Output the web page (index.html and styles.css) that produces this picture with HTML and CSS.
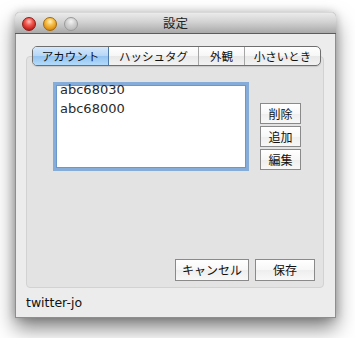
FILE: index.html
```html
<!DOCTYPE html>
<html lang="ja">
<head>
<meta charset="utf-8">
<title>設定</title>
<link rel="stylesheet" href="styles.css">
</head>
<body>
<div class="window">
  <div class="titlebar">
    <div class="lights">
      <span class="light red"></span>
      <span class="light orange"></span>
      <span class="light gray"></span>
    </div>
    <div class="title">設定</div>
  </div>
  <div class="content">
    <div class="group">
      <div class="tabs">
        <div class="tab selected t1">アカウント</div>
        <div class="tab t2">ハッシュタグ</div>
        <div class="tab t3">外観</div>
        <div class="tab t4">小さいとき</div>
      </div>
      <div class="main">
        <div class="list">
          <div class="item first">abc68030</div>
          <div class="item">abc68000</div>
        </div>
        <div class="side">
          <button class="btn small">削除</button>
          <button class="btn small">追加</button>
          <button class="btn small">編集</button>
        </div>
      </div>
      <div class="footer">
        <button class="btn cancel">キャンセル</button>
        <button class="btn save">保存</button>
      </div>
    </div>
    <div class="status">twitter-jo</div>
  </div>
</div>
</body>
</html>
```

FILE: styles.css
```css
html, body {
  margin: 0;
  padding: 0;
  background: #ffffff;
}
body {
  font-family: "DejaVu Sans", "Noto Sans CJK JP", sans-serif;
  color: #111;
  min-height: 338px;
  padding-top: 12px;
  padding-bottom: 20px;
  box-sizing: border-box;
  overflow: hidden;
}
.window {
  margin: 0 0 0 15px;
  width: 321px;
  height: 306px;
  box-sizing: border-box;
  background: #ececec;
  border: 1px solid #8e8e8e;
  border-top: none;
  border-radius: 5px 5px 0 0;
  box-shadow: 0 10px 20px rgba(0, 0, 0, 0.5), 0 0 8px rgba(0,0,0,0.2);
  display: flex;
  flex-direction: column;
}
.titlebar {
  height: 22px;
  box-sizing: border-box;
  margin: 0 -1px;
  border-radius: 5px 5px 0 0;
  background: linear-gradient(#ebebeb, #d2d2d2 45%, #a9a9a9);
  border-bottom: 1px solid #5c5c5c;
  border-top: 1px solid #d8d8d8;
  display: flex;
  align-items: center;
}
.lights {
  display: flex;
  gap: 7px;
  margin-left: 7px;
  margin-top: 1px;
}
.light {
  width: 14px;
  height: 14px;
  border-radius: 50%;
  box-sizing: border-box;
}
.red {
  background: radial-gradient(circle at 50% 30%, #ffc4c0 0, #f25a52 35%, #c3211b 75%, #8e1410 100%);
  border: 1px solid #8b1b17;
}
.orange {
  background: radial-gradient(circle at 50% 30%, #fff1c4 0, #f6c04a 35%, #e08e10 75%, #a9630a 100%);
  border: 1px solid #a0680d;
}
.gray {
  background: radial-gradient(circle at 50% 30%, #f4f4f4 0, #d2d2d2 40%, #b0b0b0 100%);
  border: 1px solid #9a9a9a;
}
.title {
  flex: 1;
  text-align: center;
  font-family: "Noto Sans CJK JP", sans-serif;
  font-size: 12.5px;
  color: #222;
  margin-left: -63px;
  line-height: 20px;
}
.content {
  flex: 1;
  display: flex;
  flex-direction: column;
  padding: 0 11px 0 10px;
}
.group {
  margin-top: 22px;
  height: 232px;
  box-sizing: border-box;
  background: #e3e3e3;
  border: 1px solid #d2d2d2;
  border-radius: 4px;
  display: flex;
  flex-direction: column;
}
.tabs {
  margin: -11px 0 0 5px;
  display: flex;
  height: 20px;
  box-sizing: border-box;
  border: 1px solid #6f6f6f;
  border-radius: 5px;
  overflow: hidden;
  width: 289px;
  background: linear-gradient(#ffffff, #f6f6f6 50%, #e8e8e8 51%, #f2f2f2);
  box-shadow: 0 1px 1px rgba(0,0,0,0.12);
}
.tab {
  font-family: "Noto Sans CJK JP", sans-serif;
  font-size: 11.5px;
  line-height: 18px;
  text-align: center;
  color: #111;
  border-left: 1px solid #a6a6a6;
  box-sizing: border-box;
}
.tab.t1 { width: 76px; border-left: none; }
.tab.t2 { width: 89px; }
.tab.t3 { width: 46px; }
.tab.t4 { flex: 1; }
.tab.selected {
  background: linear-gradient(#d6e9fb, #b6d6f5 50%, #93c3f0 51%, #b2dafa);
  border-right: 1px solid #4f79a8;
}
.tab.selected + .tab { border-left: none; }
.main {
  display: flex;
  margin-top: 16px;
  margin-left: 26px;
}
.list {
  width: 196px;
  height: 89px;
  box-sizing: border-box;
  background: #fff;
  border: 3px solid #86acd9;
  box-shadow: inset 0 0 0 1px #6a97cc;
  padding: 0 4px;
  font-size: 13px;
  line-height: 18.5px;
  color: #2a2a2a;
}
.item.first { margin-top: -4px; }
.side {
  display: flex;
  flex-direction: column;
  gap: 2px;
  margin-left: 11px;
  margin-top: 21px;
}
.btn {
  font-family: "Noto Sans CJK JP", sans-serif;
  font-size: 12px;
  color: #111;
  height: 22px;
  padding: 0;
  box-sizing: border-box;
  border: 1px solid #8a8a8a;
  background: linear-gradient(#ffffff, #f7f7f7 50%, #eeeeee 51%, #f8f8f8);
  border-radius: 0;
  line-height: 18px;
}
.btn.small { width: 41px; height: 21px; }
.footer {
  margin-top: auto;
  margin-bottom: 6px;
  margin-right: 8px;
  display: flex;
  justify-content: flex-end;
  gap: 6px;
}
.btn.cancel { width: 74px; }
.btn.save { width: 60px; }
.status {
  font-size: 12.5px;
  margin-top: 7px;
  color: #111;
  line-height: 16px;
}
```
